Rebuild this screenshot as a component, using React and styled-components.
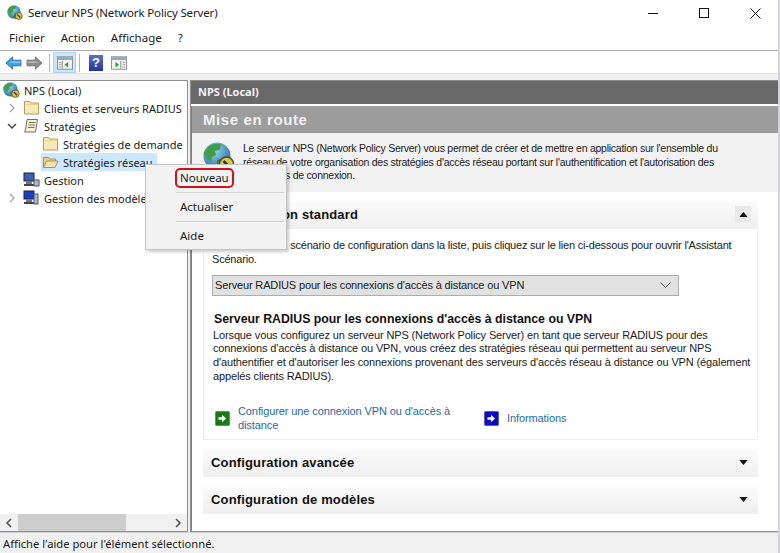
import styled, { createGlobalStyle } from "styled-components";

const GlobalStyle = createGlobalStyle`
  html, body { margin: 0; padding: 0; background: #fff; }
  * { box-sizing: border-box; }
  svg { flex: none; display: block; }
`;

const GlobeIcon = ({ size = 16 }) => (
  <svg width={size} height={size} viewBox="0 0 32 32">
    <defs>
      <radialGradient id="sea" cx="0.4" cy="0.3" r="0.8">
        <stop offset="0" stopColor="#9bd8f2" />
        <stop offset="1" stopColor="#1c5f9c" />
      </radialGradient>
    </defs>
    <circle cx="14" cy="14" r="13.500" fill="url(#sea)" />
    <path d="M5 5c4-3.500 9-4 13-2.500l-1 5-5 1.500 1 4-4 2-1 5-4-3-3.500-6z" fill="#3f9e46" />
    <path d="M14 18l7-2 3 3-4 8-4 .5-2-5z" fill="#2f8a3c" />
    <circle cx="23.500" cy="22" r="7" fill="#e5c53c" stroke="#4a4a30" strokeWidth="1.500" />
    <path d="M20.500 19l6 6" stroke="#333" strokeWidth="2.500" />
  </svg>
);

const FolderIcon = ({ open }) => (
  <svg width="17" height="16" viewBox="0 0 17 16">
    {open ? (
      <>
        <path d="M1.500 13V3.500h5l1 1.500h6v2" fill="#e9d48f" stroke="#a68f50" />
        <path d="M1.500 13.500l3-6.500h11.500l-3 6.500z" fill="#f6e5ac" stroke="#a68f50" />
      </>
    ) : (
      <>
        <path d="M1.500 1.500h5l1 1.500h8v11h-14z" fill="#f8e9b8" stroke="#b49c5c" />
        <path d="M2.500 4h12v1h-12z" fill="#e7d28d" />
      </>
    )}
  </svg>
);

const ScrollIcon = () => (
  <svg width="17" height="16" viewBox="0 0 17 16">
    <path d="M4 1.500h10.500l-2 12.500h-11l1-2z" fill="#f5f0dc" stroke="#77705a" />
    <path d="M6 4.500h6.500M5.500 7h6.500M5 9.500h6.500" stroke="#77705a" />
  </svg>
);

const ServerIcon = ({ dark }) => (
  <svg width="17" height="16" viewBox="0 0 17 16">
    <rect x="1" y="1" width="10" height="8" fill={dark ? "#1a3fc0" : "#3c62b8"} stroke="#223" />
    <rect x="3" y="9" width="6" height="3" fill="#777" />
    <rect x="1" y="12" width="11" height="2" fill="#444" />
    <rect x="11" y={dark ? 4 : 8} width={dark ? 4 : 5} height={dark ? 10 : 6} fill="#a9b8d6" stroke="#556" />
  </svg>
);

const Chevron = ({ open }) => (
  <svg width="10" height="10" viewBox="0 0 10 10">
    <path
      d={open ? "M1 3l4 4 4-4" : "M3 1l4 4-4 4"}
      fill="none"
      stroke={open ? "#404040" : "#a6a6a6"}
      strokeWidth="1.400"
    />
  </svg>
);

const ArrowTile = ({ color, border }) => (
  <svg width="15" height="15" viewBox="0 0 15 15">
    <rect x="0.500" y="0.500" width="14" height="14" rx="1" fill={color} stroke={border} />
    <path d="M3.500 6.200h3.500V3.800l4 3.700-4 3.700V8.800H3.500z" fill="#fff" />
  </svg>
);

const PaneIcon = ({ flip }) => (
  <svg width="16" height="14" viewBox="0 0 18 15">
    <rect x="0.500" y="0.500" width="17" height="14" fill="#f3f3f3" stroke="#7e8b8e" />
    <rect x="1" y="1" width="16" height="3" fill="#9aa6a8" />
    <path d={flip ? "M11 5v9" : "M6 5v9"} stroke="#7e8b8e" />
    <path d={flip ? "M5 6.500l4 3-4 3z" : "M12.500 6.500l-4 3 4 3z"} fill="#2f9b3c" />
    <path d={flip ? "M13 7h3M13 9.500h3M13 12h3" : "M2 7h3M2 9.500h3M2 12h3"} stroke="#8a9a9c" />
  </svg>
);

const NavArrow = ({ back }) => (
  <svg width="17" height="14" viewBox="0 0 18 15" style={{ transform: back ? "none" : "scaleX(-1)" }}>
    <path
      d="M1 7.500L8 1v3.500h9v6H8V14z"
      fill={back ? "#3f9fe0" : "#8e8e8e"}
      stroke={back ? "#1f6fb0" : "#6e6e6e"}
    />
    <path d="M8 5.500h8.500v2H3.500z" fill="#fff" opacity="0.35" />
  </svg>
);

const Caret = ({ up }) => (
  <svg width="9" height="5" viewBox="0 0 10 6">
    <path d={up ? "M0 6L5 0l5 6z" : "M0 0l5 6 5-6z"} fill="#111" />
  </svg>
);

const Window = styled.div`
  width: 780px;
  height: 553px;
  display: flex;
  flex-direction: column;
  position: relative;
  overflow: hidden;
  background: #fff;
  color: #1a1a1a;
  font-family: "Noto Sans", sans-serif;
  font-size: 11px;
  border-right: 2px solid #cfd6d9;
`;

const TitleBar = styled.div`
  height: 26px;
  display: flex;
  align-items: center;
  padding-left: 7px;
  gap: 5px;
  flex: none;
`;

const TitleText = styled.span`
  flex: 1;
  font-size: 11.500px;
  letter-spacing: -0.150px;
  padding-bottom: 2px;
`;

const WinButton = styled.div`
  width: 46px;
  height: 26px;
  display: flex;
  align-items: center;
  justify-content: center;
`;

const MenuBar = styled.div`
  height: 25px;
  display: flex;
  align-items: center;
  padding: 0 0 2px 9px;
  gap: 16px;
  font-size: 11.500px;
  border-bottom: 1px solid #a9a9a9;
  flex: none;
`;

const ToolBar = styled.div`
  height: 23px;
  display: flex;
  align-items: center;
  padding: 1px 0 0 3px;
  flex: none;
  border-bottom: 1px solid #e3e3e3;
`;

const ToolButton = styled.div`
  width: ${(p) => p.$w || 23}px;
  height: 21px;
  display: flex;
  align-items: center;
  justify-content: center;
  background: ${(p) => (p.$active ? "#cde6f7" : "transparent")};
  border: 1px solid ${(p) => (p.$active ? "#a9d2ee" : "transparent")};
`;

const ToolSep = styled.div`
  width: 1px;
  height: 18px;
  margin: 0 3px;
  background: #b5b5b5;
`;

const HelpTile = styled.div`
  width: 14px;
  height: 16px;
  background: linear-gradient(#5a6fd0, #26349a);
  color: #fff;
  font: bold 13px/16px "Liberation Sans", sans-serif;
  text-align: center;
`;

const Workspace = styled.div`
  flex: 1;
  min-height: 0;
  display: flex;
  background: #f0f0f0;
  padding-top: 6px;
  gap: 2px;
`;

const TreePane = styled.div`
  width: 188px;
  display: flex;
  flex-direction: column;
  background: #fff;
  border: 1px solid #8f8f8f;
  border-left: 0;
  overflow: hidden;
`;

const Tree = styled.div`
  flex: 1;
  overflow: hidden;
`;

const TreeRow = styled.div`
  height: 18px;
  display: flex;
  align-items: center;
  padding-left: ${(p) => p.$indent}px;
  gap: 4px;
  white-space: nowrap;
`;

const Twist = styled.span`
  width: 10px;
  height: 10px;
  flex: none;
  margin-right: 2px;
  display: flex;
`;

const Selected = styled.span`
  display: flex;
  align-items: center;
  gap: 4px;
  height: 18px;
  padding: 0 4px 0 1px;
  margin-left: -1px;
  background: #cce8ff;
`;

const HScroll = styled.div`
  height: 17px;
  display: flex;
  align-items: center;
  justify-content: space-between;
  background: #f0f0f0;
  position: relative;
  padding: 0 5px;
`;

const Thumb = styled.div`
  position: absolute;
  left: 18px;
  width: 108px;
  top: 0;
  bottom: 0;
  background: #cdcdcd;
`;

const ContentPane = styled.div`
  flex: 1;
  display: flex;
  flex-direction: column;
  background: #fff;
  border: 1px solid #8f8f8f;
  border-right: 0;
  min-width: 0;
  font-family: "Liberation Sans", sans-serif;
`;

const PaneHeader = styled.div`
  height: 23px;
  background: #696969;
  color: #f4f4f4;
  font-weight: bold;
  font-size: 11px;
  font-family: "Noto Sans", sans-serif;
  display: flex;
  align-items: center;
  padding: 0 0 2px 7px;
  flex: none;
`;

const Panel = styled.div`
  flex: 1;
  margin-top: 2px;
  border-left: 1px solid #808080;
  border-top: 1px solid #a0a0a0;
  display: flex;
  flex-direction: column;
  min-height: 0;
`;

const PanelTitle = styled.div`
  height: 26px;
  background: #9c9c9c;
  color: #f2f2f2;
  font-weight: bold;
  font-size: 15px;
  letter-spacing: 0.600px;
  display: flex;
  align-items: center;
  padding: 0 0 2px 11px;
  flex: none;
`;

const Intro = styled.div`
  height: 59px;
  background: #f2f2f2;
  display: flex;
  padding: 9px 10px 0 11px;
  gap: 8px;
  font-size: 10.500px;
  line-height: 13.500px;
  letter-spacing: -0.250px;
  white-space: nowrap;
  flex: none;
`;

const IntroIcon = styled.div`
  flex: none;
`;

const Sections = styled.div`
  flex: 1;
  display: flex;
  flex-direction: column;
  padding: 10px 20px 0 11px;
  gap: 10px;
`;

const Card = styled.div`
  display: flex;
  flex-direction: column;
`;

const CardBand = styled.div`
  height: 27px;
  padding: 0 9px 3px 8px;
  background: linear-gradient(#fbfbfb, #efefef);
  font-weight: bold;
  font-size: 13px;
  letter-spacing: 0.150px;
  color: #111;
  display: flex;
  align-items: center;
  justify-content: space-between;
`;

const CaretBox = styled.span`
  width: 16px;
  height: 16px;
  display: flex;
  align-items: center;
  justify-content: center;
  margin-right: -2px;
  background: ${(p) => (p.$tinted ? "#e9e9e9" : "transparent")};
`;

const CardBody = styled.div`
  height: 211px;
  border: 1px solid #eeeeee;
  border-top: 0;
  padding: 10px 8px 0 8px;
  line-height: 13.500px;
  letter-spacing: -0.200px;
  white-space: nowrap;
`;

const ScenarioSelect = styled.div`
  width: 467px;
  height: 21px;
  margin-top: 9px;
  background: #e1e1e1;
  border: 1px solid #adadad;
  display: flex;
  align-items: center;
  justify-content: space-between;
  padding: 0 7px 0 2px;
  letter-spacing: -0.150px;
`;

const BodyTitle = styled.div`
  font-weight: bold;
  font-size: 12.300px;
  letter-spacing: 0;
  margin: 17px 0 2px 2px;
  color: #111;
`;

const BodyText = styled.div`
  margin-left: 1px;
  line-height: 13.700px;
  letter-spacing: -0.130px;
`;

const LinkRow = styled.div`
  display: flex;
  align-items: center;
  margin-top: 22px;
  padding-left: 3px;
`;

const LinkItem = styled.div`
  display: flex;
  align-items: center;
  gap: 8px;
  width: ${(p) => p.$w}px;
  color: #1f6aa5;
  letter-spacing: -0.100px;
`;

const StatusBar = styled.div`
  height: 21px;
  flex: none;
  background: #f0f0f0;
  border-top: 1px solid #d0d0d0;
  padding-left: 3px;
  font-size: 11.200px;
  display: flex;
  align-items: center;
`;

const ContextMenu = styled.div`
  position: absolute;
  left: 145px;
  top: 164px;
  width: 142px;
  height: 86px;
  background: #f2f2f2;
  border: 1px solid #c4c4c4;
  box-shadow: 2px 2px 3px rgba(0, 0, 0, 0.2);
  padding: 2px 2px 0 2px;
  font-size: 11.500px;
  display: flex;
  flex-direction: column;
`;

const MenuItem = styled.div`
  height: 21px;
  display: flex;
  align-items: center;
  padding-left: 32px;
  flex: none;
`;

const MenuSep = styled.div`
  height: 1px;
  margin: 4px 0 3px 28px;
  background: #d3d3d3;
  flex: none;
`;

const Highlight = styled.span`
  border: 2px solid #d3111b;
  border-radius: 5px;
  margin-left: -5px;
  padding: 0 3px;
  height: 20px;
  display: flex;
  align-items: center;
`;

export default function App() {
  return (
    <>
      <GlobalStyle />
      <Window>
        <TitleBar>
          <GlobeIcon size={16} />
          <TitleText>Serveur NPS (Network Policy Server)</TitleText>
          <WinButton>
            <svg width="11" height="11"><path d="M0 5.500h10" stroke="#111" /></svg>
          </WinButton>
          <WinButton>
            <svg width="11" height="11"><rect x="0.500" y="0.500" width="9" height="9" fill="none" stroke="#111" /></svg>
          </WinButton>
          <WinButton>
            <svg width="11" height="11"><path d="M0.500 0.500l10 10M10.500 0.500l-10 10" stroke="#111" /></svg>
          </WinButton>
        </TitleBar>
        <MenuBar>
          <span>Fichier</span>
          <span>Action</span>
          <span>Affichage</span>
          <span>?</span>
        </MenuBar>
        <ToolBar>
          <ToolButton $w={20}><NavArrow back /></ToolButton>
          <ToolButton $w={23}><NavArrow /></ToolButton>
          <ToolSep />
          <ToolButton $active><PaneIcon /></ToolButton>
          <ToolSep />
          <ToolButton $w={26}><HelpTile>?</HelpTile></ToolButton>
          <ToolButton $w={20}><PaneIcon flip /></ToolButton>
        </ToolBar>
        <Workspace>
          <TreePane>
            <Tree>
              <TreeRow $indent={3}><GlobeIcon size={17} />NPS (Local)</TreeRow>
              <TreeRow $indent={7}><Twist><Chevron /></Twist><FolderIcon />Clients et serveurs RADIUS</TreeRow>
              <TreeRow $indent={7}><Twist><Chevron open /></Twist><ScrollIcon />Stratégies</TreeRow>
              <TreeRow $indent={42}><FolderIcon />Stratégies de demande</TreeRow>
              <TreeRow $indent={42}>
                <Selected><FolderIcon open />Stratégies réseau</Selected>
              </TreeRow>
              <TreeRow $indent={23}><ServerIcon />Gestion</TreeRow>
              <TreeRow $indent={7}><Twist><Chevron /></Twist><ServerIcon dark />Gestion des modèles</TreeRow>
            </Tree>
            <HScroll>
              <Thumb />
              <svg width="8" height="10"><path d="M6 1L2 5l4 4" fill="none" stroke="#505050" strokeWidth="1.500" /></svg>
              <svg width="8" height="10"><path d="M2 1l4 4-4 4" fill="none" stroke="#505050" strokeWidth="1.500" /></svg>
            </HScroll>
          </TreePane>
          <ContentPane>
            <PaneHeader>NPS (Local)</PaneHeader>
            <Panel>
              <PanelTitle>Mise en route</PanelTitle>
              <Intro>
                <IntroIcon><GlobeIcon size={32} /></IntroIcon>
                <div>
                  Le serveur NPS (Network Policy Server) vous permet de créer et de mettre en application sur l'ensemble du<br />
                  réseau de votre organisation des stratégies d'accès réseau portant sur l'authentification et l'autorisation des<br />
                  demandes de connexion.
                </div>
              </Intro>
              <Sections>
                <Card>
                  <CardBand>
                    Configuration standard
                    <CaretBox $tinted><Caret up /></CaretBox>
                  </CardBand>
                  <CardBody>
                    Sélectionnez un scénario de configuration dans la liste, puis cliquez sur le lien ci-dessous pour ouvrir l'Assistant<br />
                    Scénario.
                    <ScenarioSelect>
                      Serveur RADIUS pour les connexions d'accès à distance ou VPN
                      <svg width="11" height="7"><path d="M0.500 0.500l5 5 5-5" fill="none" stroke="#555" /></svg>
                    </ScenarioSelect>
                    <BodyTitle>Serveur RADIUS pour les connexions d'accès à distance ou VPN</BodyTitle>
                    <BodyText>
                      Lorsque vous configurez un serveur NPS (Network Policy Server) en tant que serveur RADIUS pour des<br />
                      connexions d'accès à distance ou VPN, vous créez des stratégies réseau qui permettent au serveur NPS<br />
                      d'authentifier et d'autoriser les connexions provenant des serveurs d'accès réseau à distance ou VPN (également<br />
                      appelés clients RADIUS).
                    </BodyText>
                    <LinkRow>
                      <LinkItem $w={269}>
                        <ArrowTile color="#1a7a1a" border="#5a9a5a" />
                        <span>Configurer une connexion VPN ou d'accès à<br />distance</span>
                      </LinkItem>
                      <LinkItem $w={120}>
                        <ArrowTile color="#0a0ac8" border="#5a5ac8" />
                        Informations
                      </LinkItem>
                    </LinkRow>
                  </CardBody>
                </Card>
                <Card>
                  <CardBand>
                    Configuration avancée
                    <CaretBox><Caret /></CaretBox>
                  </CardBand>
                </Card>
                <Card>
                  <CardBand>
                    Configuration de modèles
                    <CaretBox><Caret /></CaretBox>
                  </CardBand>
                </Card>
              </Sections>
            </Panel>
          </ContentPane>
        </Workspace>
        <StatusBar>Affiche l'aide pour l'élément sélectionné.</StatusBar>
        <ContextMenu>
          <MenuItem><Highlight>Nouveau</Highlight></MenuItem>
          <MenuSep />
          <MenuItem>Actualiser</MenuItem>
          <MenuSep />
          <MenuItem>Aide</MenuItem>
        </ContextMenu>
      </Window>
    </>
  );
}
